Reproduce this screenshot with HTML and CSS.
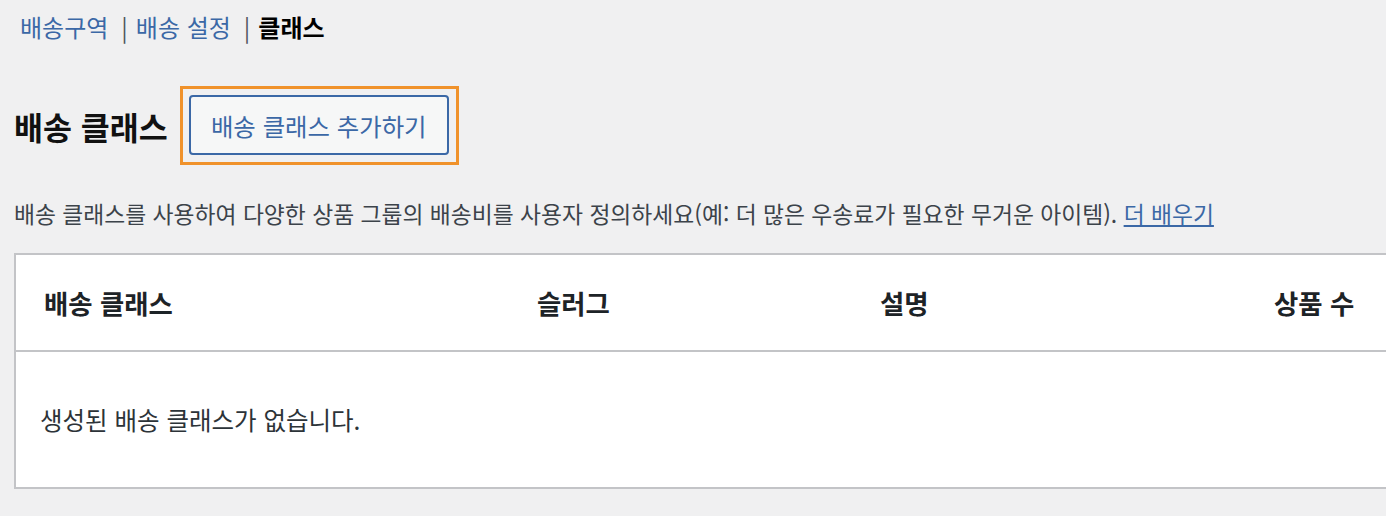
FILE: index.html
```html
<!DOCTYPE html>
<html lang="ko">
<head>
  <meta charset="utf-8">
  <title>배송 클래스</title>
  <link rel="stylesheet" href="styles.css">
</head>
<body>
  <div class="wrap">
    <ul class="subsubsub">
      <li><a href="#">배송구역</a><span class="sep">|</span></li>
      <li><a href="#">배송 설정</a><span class="sep">|</span></li>
      <li><span class="current">클래스</span></li>
    </ul>

    <div class="page-head">
      <h2 class="page-title">배송 클래스</h2>
      <span class="focus-ring">
        <button type="button" class="add-button">배송 클래스 추가하기</button>
      </span>
    </div>

    <p class="description">
      배송 클래스를 사용하여 다양한 상품 그룹의 배송비를 사용자 정의하세요(예: 더 많은 우송료가 필요한 무거운 아이템). <a href="#">더 배우기</a>
    </p>

    <div class="classes-table">
      <div class="table-row table-head">
        <div class="cell">배송 클래스</div>
        <div class="cell">슬러그</div>
        <div class="cell">설명</div>
        <div class="cell">상품 수</div>
      </div>
      <div class="table-empty">생성된 배송 클래스가 없습니다.</div>
    </div>
  </div>
</body>
</html>
```

FILE: styles.css
```css
:root {
  --bg: #f0f0f1;
  --text: #1d2327;
  --text-body: #3c434a;
  --link: #3b68a6;
  --border: #c3c4c7;
  --focus: #f0922b;
}

* {
  margin: 0;
  padding: 0;
  box-sizing: border-box;
}

body {
  background: var(--bg);
  color: var(--text);
  font-family: "Noto Sans CJK KR", "Noto Sans", sans-serif;
  overflow: hidden;
}

.wrap {
  padding: 0 0 0 14px;
}

.subsubsub {
  list-style: none;
  display: flex;
  padding: 10px 0 0 6px;
  font-size: 24px;
  line-height: 34px;
}

.subsubsub a {
  color: var(--link);
  text-decoration: none;
}

.subsubsub .sep {
  color: #50575e;
  margin: 0 8px 0 13px;
}

.subsubsub .current {
  color: #000;
  font-weight: 700;
}

.page-head {
  display: flex;
  align-items: center;
  gap: 12px;
  margin-top: 42px;
}

.page-title {
  font-size: 31.5px;
  font-weight: 700;
  line-height: 40px;
  color: #111;
}

.focus-ring {
  display: block;
  border: 3px solid var(--focus);
  padding: 6px 7px 7px 6px;
}

.add-button {
  display: block;
  height: 60px;
  width: 260px;
  border: 2px solid var(--link);
  border-radius: 4px;
  background: #f6f7f7;
  color: var(--link);
  font-family: inherit;
  font-size: 24.4px;
  cursor: pointer;
}

.description {
  margin-top: 33px;
  font-size: 22.8px;
  line-height: 32px;
  color: var(--text-body);
}

.description a {
  color: var(--link);
}

.classes-table {
  margin-top: 23px;
  width: 1420px;
  border: 2px solid var(--border);
  background: #fff;
}

.table-row {
  display: grid;
  grid-template-columns: 493px 343px 394px 1fr;
}

.table-head {
  height: 97px;
  align-items: center;
  border-bottom: 2px solid var(--border);
}

.cell {
  padding-left: 28px;
  font-size: 26.4px;
  font-weight: 700;
  color: var(--text);
}

.table-empty {
  height: 135px;
  display: flex;
  align-items: center;
  padding-left: 24px;
  font-size: 24.5px;
  color: #2c3338;
}
```
